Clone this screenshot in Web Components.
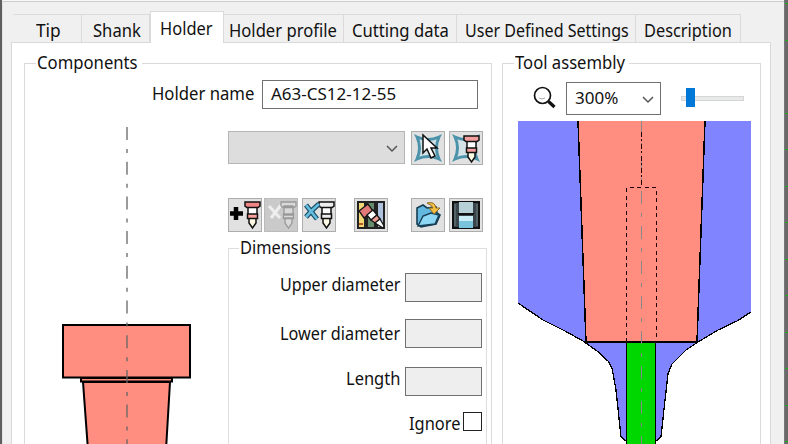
<!DOCTYPE html>
<html lang="en"><head><meta charset="utf-8"><title>Tool holder</title>
<style>
html,body{margin:0;width:788px;height:444px;overflow:hidden;background:#696969}
body{font:18px/24px "Noto Sans","Open Sans",sans-serif;color:#111}
.form{display:grid;grid-template-columns:203px 1fr;grid-template-rows:67px 1fr}
.name{grid-column:1/3;display:flex;justify-content:flex-end;gap:8px;padding:16px 13px 0 0}
.controls{display:flex;flex-direction:column}
.pick,.tools{display:flex;height:34px}
.pick{gap:4px}.pick ui-combo{margin-right:2px}
.tools{margin:33px 0 16px}
.row{display:flex;justify-content:flex-end;gap:5px;height:29px;padding-right:4px}
.zoom{display:flex;padding:18px 0 0 29px;height:39px}
</style></head><body>
<app-window>
<tab-bar slot="tabs">
<tab-item style="width:68px;padding-left:22px" first><ui-label w="25">Tip</ui-label></tab-item>
<tab-item style="width:68px;padding-left:11px"><ui-label w="48">Shank</ui-label></tab-item>
<tab-item style="width:74px;padding-left:9px" active><ui-label w="53">Holder</ui-label></tab-item>
<tab-item style="width:120px;padding-left:5px"><ui-label w="108">Holder profile</ui-label></tab-item>
<tab-item style="width:113px;padding-left:8px"><ui-label w="97">Cutting data</ui-label></tab-item>
<tab-item style="width:179px;padding-left:8px"><ui-label w="164">User Defined Settings</ui-label></tab-item>
<tab-item style="width:105px;padding-left:8px"><ui-label w="88">Description</ui-label></tab-item>
</tab-bar>
<group-box style="width:468px"><ui-label slot="title" w="101">Components</ui-label>
<div class="form">
<div class="name"><ui-label w="102" style="margin-top:1px">Holder name</ui-label><ui-field style="width:216px;--bg:#fff"><ui-label w="125" style="font-size:17px">A63-CS12-12-55</ui-label></ui-field></div>
<holder-drawing></holder-drawing>
<div class="controls">
<div class="pick"><ui-combo disabled style="width:177px;height:33px"></ui-combo><icon-button icon="select"></icon-button><icon-button icon="shape"></icon-button></div>
<div class="tools"><icon-button icon="add"></icon-button><icon-button icon="off" style="margin-left:2px"></icon-button><icon-button icon="remove" style="margin-left:4px"></icon-button><icon-button icon="library" style="margin-left:18px"></icon-button><icon-button icon="open" style="margin-left:23px"></icon-button><icon-button icon="save" style="margin-left:4px"></icon-button></div>
<group-box style="width:259px;flex:1;--soft:#dedede;--inset:12px"><ui-label slot="title" w="91">Dimensions</ui-label>
<div class="row" style="margin-top:24px"><ui-label w="120" style="margin-top:-1px">Upper diameter</ui-label><ui-field style="width:77px"></ui-field></div>
<div class="row" style="margin-top:17px"><ui-label w="120" style="margin-top:2px">Lower diameter</ui-label><ui-field style="width:77px"></ui-field></div>
<div class="row" style="margin-top:19px"><ui-label w="54" style="margin-top:-1px">Length</ui-label><ui-field style="width:77px"></ui-field></div>
<div class="row" style="margin-top:17px;gap:3px"><ui-label w="51" style="margin-top:-2px">Ignore</ui-label><check-box></check-box></div>
</group-box>
</div></div></group-box>
<group-box style="width:259px"><ui-label slot="title" w="110">Tool assembly</ui-label>
<div class="zoom"><zoom-icon></zoom-icon><ui-combo style="width:95px;height:33px;margin-left:9px"><ui-label w="43" style="font-size:17px">300%</ui-label></ui-combo><zoom-slider></zoom-slider></div>
<assembly-drawing></assembly-drawing>
</group-box>
</app-window>
<script>
const define=(name,html,ready)=>customElements.define(name,class extends HTMLElement{
 connectedCallback(){
  if(this.shadowRoot)return;
  this.attachShadow({mode:'open'}).innerHTML=html;
  if(ready)ready(this,this.shadowRoot);
 }
});
define('app-window',`<style>:host{display:grid;grid-template-columns:2px 782px 4px;width:788px;height:444px}
.left{background:#5f5f5f}
main{background:#f0f0f0;border-left:1px solid #e2e2e2;box-sizing:border-box;border-top:1px solid #f8f8f8;box-shadow:inset 0 1px #ccc;padding:10px 0 0 8px;height:444px;overflow:hidden}
.page{display:flex;gap:10px;width:760px;height:410px;box-sizing:border-box;background:#fff;border:1px solid #d9d9d9;padding:20px 0 0 12px}
.right{background:repeating-linear-gradient(#696969 0 3.5px,#1faf1f 3.5px 4.500px,#696969 4.500px 36.500px);border-left:1px solid #777;box-sizing:border-box}</style>
<div class="left"></div><main><slot name="tabs"></slot><div class="page"><slot></slot></div></main><div class="right"></div>`);
define('tab-bar','<style>:host{display:flex;align-items:flex-end;height:31px;padding-left:3px}</style><slot></slot>');
define('tab-item',`<style>:host{display:block;box-sizing:border-box;height:28px;padding-top:3px;background:#f0f0f0;border-top:1px solid #dadada;border-right:1px solid #dadada}
:host([active]){position:relative;height:32px;margin-bottom:-1px;padding-top:4px;background:#fff;border-left:1px solid #dadada}</style><slot></slot>`);
define('ui-label','<style>:host{display:block;flex:none;height:24px;white-space:nowrap}span{display:inline-block;transform-origin:0 0}</style><span><slot></slot></span>',(host,root)=>{
 const w=+host.getAttribute('w'),s=root.querySelector('span');
 host.style.width=w+'px';
 s.style.transform=`scaleX(${w/s.offsetWidth})`;
});
define('group-box',`<style>:host{display:block;flex:none;box-sizing:border-box;border:1px solid var(--soft,#dadada);border-bottom:0}
.title{width:max-content;height:24px;margin:-14px 0 -10px calc(var(--inset,13px) - 2px);padding:0 4px 0 1px;background:#fff}</style>
<div class="title"><slot name="title"></slot></div><slot></slot>`);
define('ui-field','<style>:host{display:block;box-sizing:border-box;height:29px;border:1px solid #707070;background:var(--bg,#eee);padding:1px 0 0 8px}</style><slot></slot>');
define('check-box','<style>:host{display:block;box-sizing:border-box;width:19px;height:19px;margin-top:-1px;border:1px solid #222;background:#fff}</style>');
define('ui-combo',`<style>:host{display:flex;justify-content:space-between;box-sizing:border-box;border:1px solid #707070;background:#fff;padding:3px 6px 0 8px}
:host([disabled]){background:#ddd;border-color:#b5b5b5}svg{width:12px;height:8px;margin:10px 0 0 auto}</style><slot></slot><svg><path d="M1 1l5 5 5-5" fill="none" stroke="#555" stroke-width="1.5"/></svg>`);
define('zoom-icon','<style>:host{display:block;width:25px}svg{display:block;margin:4px 0 0 1px}</style><svg width="24" height="24"><circle cx="9.5" cy="9.5" r="8" fill="#fff" stroke="#111" stroke-width="1.7"/><path d="M6 12q3 2 6 0" fill="none" stroke="#aaa"/><path d="M15.5 15.5l6 5.5" stroke="#111" stroke-width="3.2"/></svg>');
define('zoom-slider','<style>:host{display:block;margin:6px 0 0 20px}svg{display:block}</style><svg width="64" height="20"><rect x=".5" y="8.5" width="62" height="4" fill="#e8eaea" stroke="#d5d5d5"/><rect x="5" y="0" width="9" height="19" fill="#0078d7"/></svg>');
const bolt=(top,low)=>`<g stroke="#111" stroke-width="1.5"><path d="M19 7h9v9h-9z" fill="#fff"/><path d="M16 3h15v4l-2 1.500H18L16 7z" fill="${top}"/><path d="M20 19h7v5l-3.500 5-3.500-5z" fill="#fffbe5"/><path d="M18.500 15h10v4.500h-10z" fill="${low}"/></g>`;
const star='<path d="M5 5q11 5 22 0-5 11 0 22-11-5-22 0 5-11 0-22z" fill="#d3e3e8" stroke="#4b93aa" stroke-width="3"/>';
const icons={
select:star+'<path d="M11 3v18l4-4 4 9 4-2-4-8h6z" fill="#fff" stroke="#111" stroke-width="1.5"/>',
shape:star+'<g transform="translate(-2 1)">'+bolt('#f4a0a0','#f4a0a0')+'</g>',
add:'<path d="M7 8v13M1 14.500h13" stroke="#000" stroke-width="4.500"/>'+bolt('#ef8584','#f5a09b'),
off:'<path d="M4 7l11 12M16 6L6 19" stroke="#eee" stroke-width="3"/><g stroke="#999" stroke-width="1.300" fill="#d9d9d9"><path d="M19 7h9v9h-9zM16 3h15v4l-2 1.500H18L16 7zM20 19h7v5l-3.500 5-3.500-5zM18.500 15h10v4.500h-10z"/></g>',
remove:bolt('#eee','#eee')+'<path d="M3 6l11 14M16 5Q11 9 3 18" fill="none" stroke="#174b66" stroke-width="5"/><path d="M3 6l11 14M16 5Q11 9 3 18" fill="none" stroke="#65bddd" stroke-width="2.800"/>',
library:'<path d="M3 3h7v26H3z" fill="#f3d878" stroke="#222" stroke-width="2"/><path d="M12 3h8v26h-8z" fill="#648c6d" stroke="#222" stroke-width="2"/><path d="M22 3h7v26h-7z" fill="#aec2df" stroke="#222" stroke-width="2"/><path d="M4 25h4" stroke="#b45b20" stroke-width="2"/><g stroke="#161616" stroke-width="1.300"><path d="M4 12l9-7 5 7-9 7z" fill="#e27878"/><path d="M12 16l6-5 4 5-6 5z" fill="#fff"/><path d="M16 21l6-5 3 4-5 4z" fill="#ee9a94"/><path d="M20 24l5-4 4 7-1 2z" fill="#fff"/></g>',
open:'<path d="M5 9l6-3 4 3 9-1 1 6 3 2-4 9-15 3-4-3z" fill="#65b8df" stroke="#163e54" stroke-width="1.600"/><path d="M6 27l5-10 8-3 8 2-4 9z" fill="#8dd6f4" stroke="#163e54" stroke-width="1.400"/><path d="M15 4q8-2 9 5h4l-6 6-5-6h4q-1-3-6-5z" fill="#f3be42" stroke="#8c6b22"/>',
save:'<path d="M3 3h26v26H3z" fill="#39454a" stroke="#111" stroke-width="2"/><path d="M9 3h14v11H9z" fill="#b7d0d8"/><path d="M8 15h16" stroke="#111" stroke-width="2"/><path d="M9 17h14v12H9z" fill="#79c4db"/><path d="M9 17h14v5H9z" fill="#c9edf6"/><path d="M5 5v22M27 5v22" stroke="#718087"/>'};
define('icon-button','<style>:host{display:block;flex:none;box-sizing:border-box;width:34px;height:34px;background:#e1e1e1;border:1px solid #adadad}:host([icon=off]){background:#cacaca;border-color:#bbb}svg{display:block}</style><svg width="32" height="32"></svg>',(host,root)=>root.querySelector('svg').innerHTML=icons[host.getAttribute('icon')]);
define('holder-drawing','<style>:host,svg{display:block}svg{overflow:visible}</style><svg width="203" height="314" viewBox="25 131 203 314"><g fill="#ff8d80" stroke="#000" stroke-width="2"><path d="M63 325H190V377.500H63z"/><path d="M81 378H172V381.500H81zM83 382H170L166 450H88z"/></g><path d="M127 127V450" stroke="#666" stroke-width="1.300" stroke-dasharray="13 9 4 8.700"/></svg>');
define('assembly-drawing',`<style>:host,svg{display:block}svg{margin:-1px 0 0 15px}</style><svg width="233" height="324" viewBox="518 120 233 324" shape-rendering="crispEdges">
<path d="M518 121H751V312L737 321 718 330 698 342 686 350 672 364 668 374 665 400 661 437 656 441H626L621 437 616 390 612 368 608 361 597 351 583 341 565 331 543 320 518 303z" fill="#8085ff"/>
<path d="M518 303l25 17 22 11 18 10 14 10 11 10 4 7 4 22 5 47 5 4M751 312l-14 9-19 9-20 12-12 8-14 14-4 10-3 26-4 37-5 4" fill="none" stroke="#000" stroke-width="1.300"/>
<path d="M578 121H705L697 342H586z" fill="#ff8d80"/><path d="M578 121L586 342H697L705 121" fill="none" stroke="#000" stroke-width="1.500"/>
<path d="M626.500 342h29v110h-29z" fill="#00d600" stroke="#000" stroke-width="1.500"/>
<path d="M641.500 121V444" stroke="#888" stroke-dasharray="13 9 4 9"/>
<path d="M641.500 132V187" stroke="#200" stroke-width="1.300" stroke-dasharray="5 2 2 3"/>
<path d="M626.500 342V187.500H656.500V342" fill="none" stroke="#200" stroke-width="1.500" stroke-dasharray="4 3.500"/>
</svg>`);
</script></body></html>
